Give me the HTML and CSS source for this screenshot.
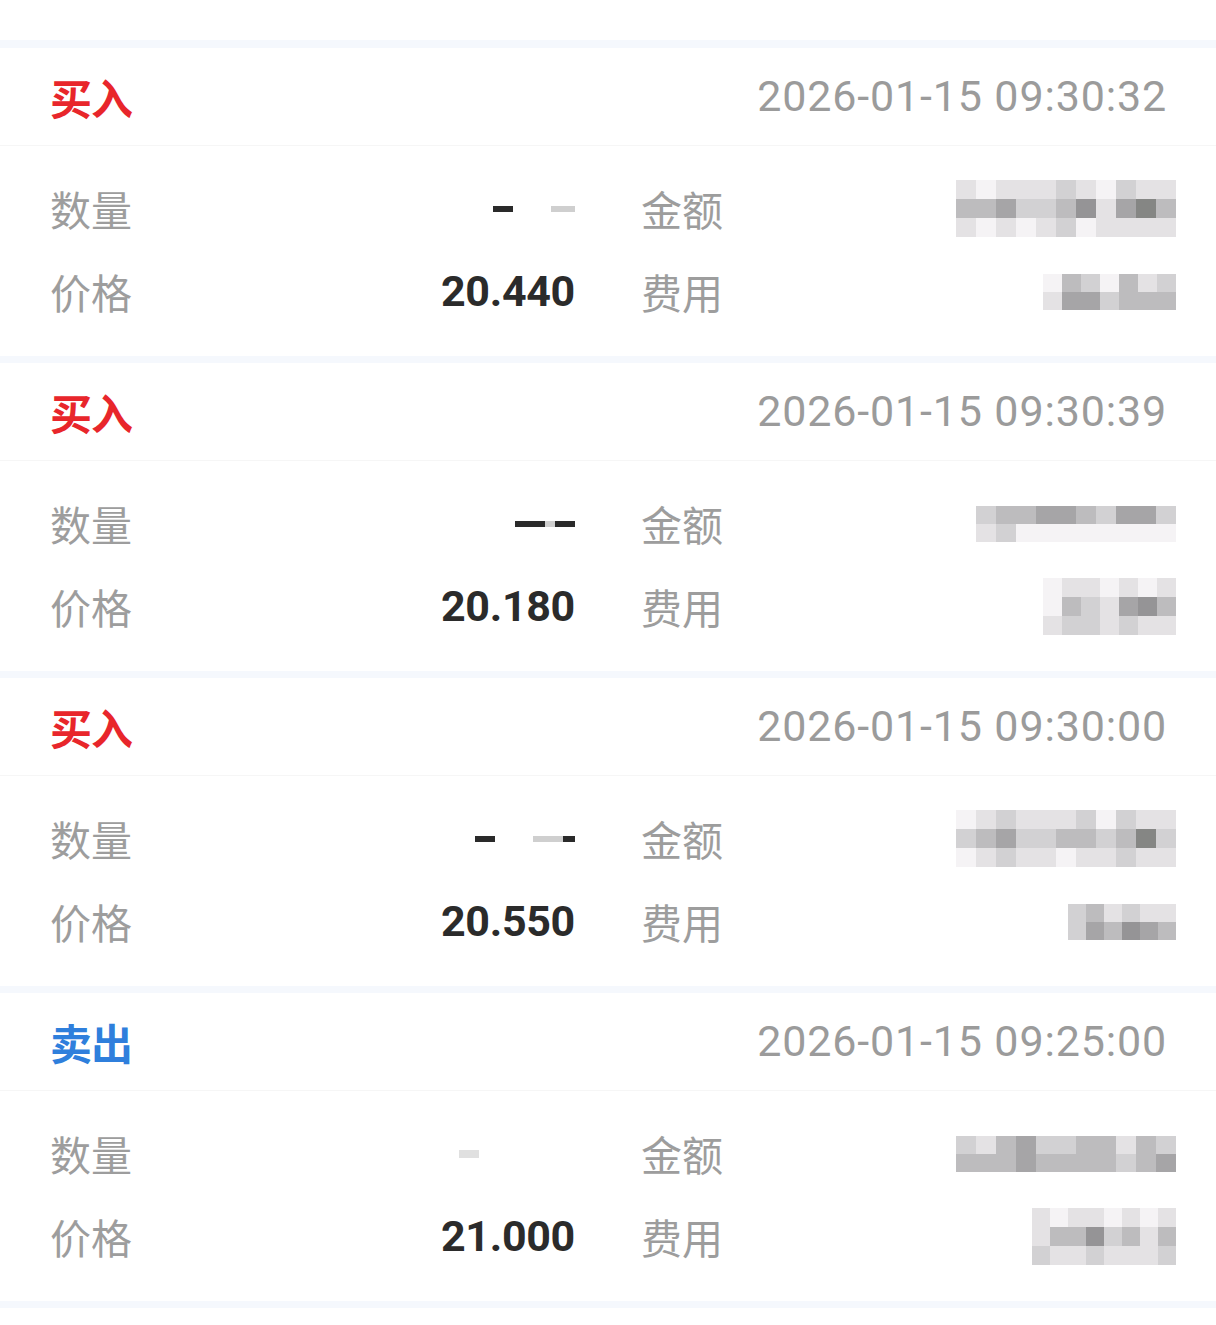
FILE: index.html
```html
<!DOCTYPE html>
<html lang="zh-CN">
<head>
<meta charset="utf-8">
<title>成交记录</title>
<link rel="stylesheet" href="styles.css">
</head>
<body>
<main class="list">

  <section class="card">
    <header class="card-head">
      <span class="side buy">买入</span>
      <span class="time">2026-01-15 09:30:32</span>
    </header>
    <div class="card-body">
      <div class="cell"><span class="label">数量</span><span class="value masked"><i class="frag dark w20"></i><i class="frag gap"></i><i class="frag grey w24"></i></span></div>
      <div class="cell"><span class="label">金额</span><span class="mosaic c11">
        <i class="s1"></i><i class="s0"></i><i class="s1"></i><i class="s1"></i><i class="s1"></i><i class="s2"></i><i class="s1"></i><i class="s0"></i><i class="s2"></i><i class="s1"></i><i class="s1"></i>
        <i class="s3"></i><i class="s3"></i><i class="s4"></i><i class="s2"></i><i class="s2"></i><i class="s3"></i><i class="s5"></i><i class="s1"></i><i class="s4"></i><i class="s6"></i><i class="s3"></i>
        <i class="s1"></i><i class="s0"></i><i class="s1"></i><i class="s0"></i><i class="s1"></i><i class="s2"></i><i class="s0"></i><i class="s1"></i><i class="s1"></i><i class="s1"></i><i class="s1"></i>
      </span></div>
      <div class="cell"><span class="label">价格</span><span class="value">20.440</span></div>
      <div class="cell"><span class="label">费用</span><span class="mosaic c7 r2">
        <i class="s0"></i><i class="s3"></i><i class="s2"></i><i class="s0"></i><i class="s3"></i><i class="s1"></i><i class="s2"></i>
        <i class="s1"></i><i class="s4"></i><i class="s4"></i><i class="s2"></i><i class="s3"></i><i class="s3"></i><i class="s3"></i>
      </span></div>
    </div>
  </section>

  <section class="card">
    <header class="card-head">
      <span class="side buy">买入</span>
      <span class="time">2026-01-15 09:30:39</span>
    </header>
    <div class="card-body">
      <div class="cell"><span class="label">数量</span><span class="value masked"><i class="frag dark w30"></i><i class="frag grey w10"></i><i class="frag dark w20"></i></span></div>
      <div class="cell"><span class="label">金额</span><span class="mosaic c10 r2">
        <i class="s2"></i><i class="s3"></i><i class="s3"></i><i class="s4"></i><i class="s4"></i><i class="s3"></i><i class="s2"></i><i class="s4"></i><i class="s4"></i><i class="s2"></i>
        <i class="s1"></i><i class="s2"></i><i class="s0"></i><i class="s0"></i><i class="s0"></i><i class="s0"></i><i class="s0"></i><i class="s0"></i><i class="s0"></i><i class="s0"></i>
      </span></div>
      <div class="cell"><span class="label">价格</span><span class="value">20.180</span></div>
      <div class="cell"><span class="label">费用</span><span class="mosaic c7">
        <i class="s0"></i><i class="s1"></i><i class="s1"></i><i class="s0"></i><i class="s1"></i><i class="s0"></i><i class="s1"></i>
        <i class="s0"></i><i class="s3"></i><i class="s2"></i><i class="s1"></i><i class="s4"></i><i class="s5"></i><i class="s3"></i>
        <i class="s1"></i><i class="s2"></i><i class="s2"></i><i class="s1"></i><i class="s2"></i><i class="s1"></i><i class="s1"></i>
      </span></div>
    </div>
  </section>

  <section class="card">
    <header class="card-head">
      <span class="side buy">买入</span>
      <span class="time">2026-01-15 09:30:00</span>
    </header>
    <div class="card-body">
      <div class="cell"><span class="label">数量</span><span class="value masked"><i class="frag dark w20"></i><i class="frag gap"></i><i class="frag grey w30"></i><i class="frag dark w12"></i></span></div>
      <div class="cell"><span class="label">金额</span><span class="mosaic c11">
        <i class="s0"></i><i class="s1"></i><i class="s2"></i><i class="s1"></i><i class="s1"></i><i class="s1"></i><i class="s2"></i><i class="s0"></i><i class="s2"></i><i class="s1"></i><i class="s1"></i>
        <i class="s2"></i><i class="s3"></i><i class="s4"></i><i class="s2"></i><i class="s2"></i><i class="s3"></i><i class="s3"></i><i class="s2"></i><i class="s3"></i><i class="s6"></i><i class="s2"></i>
        <i class="s0"></i><i class="s1"></i><i class="s2"></i><i class="s1"></i><i class="s1"></i><i class="s0"></i><i class="s1"></i><i class="s1"></i><i class="s2"></i><i class="s1"></i><i class="s1"></i>
      </span></div>
      <div class="cell"><span class="label">价格</span><span class="value">20.550</span></div>
      <div class="cell"><span class="label">费用</span><span class="mosaic c6 r2">
        <i class="s2"></i><i class="s3"></i><i class="s1"></i><i class="s2"></i><i class="s1"></i><i class="s1"></i>
        <i class="s2"></i><i class="s4"></i><i class="s3"></i><i class="s5"></i><i class="s4"></i><i class="s3"></i>
      </span></div>
    </div>
  </section>

  <section class="card">
    <header class="card-head">
      <span class="side sell">卖出</span>
      <span class="time">2026-01-15 09:25:00</span>
    </header>
    <div class="card-body">
      <div class="cell"><span class="label">数量</span><span class="value masked"><i class="frag light w20"></i><i class="frag gap wide"></i></span></div>
      <div class="cell"><span class="label">金额</span><span class="mosaic c11 r2">
        <i class="s2"></i><i class="s1"></i><i class="s3"></i><i class="s4"></i><i class="s2"></i><i class="s2"></i><i class="s3"></i><i class="s3"></i><i class="s1"></i><i class="s3"></i><i class="s2"></i>
        <i class="s3"></i><i class="s3"></i><i class="s3"></i><i class="s4"></i><i class="s3"></i><i class="s3"></i><i class="s3"></i><i class="s3"></i><i class="s2"></i><i class="s3"></i><i class="s4"></i>
      </span></div>
      <div class="cell"><span class="label">价格</span><span class="value">21.000</span></div>
      <div class="cell"><span class="label">费用</span><span class="mosaic c8">
        <i class="s1"></i><i class="s0"></i><i class="s1"></i><i class="s1"></i><i class="s0"></i><i class="s1"></i><i class="s0"></i><i class="s1"></i>
        <i class="s1"></i><i class="s3"></i><i class="s3"></i><i class="s5"></i><i class="s2"></i><i class="s3"></i><i class="s1"></i><i class="s3"></i>
        <i class="s2"></i><i class="s1"></i><i class="s1"></i><i class="s2"></i><i class="s1"></i><i class="s1"></i><i class="s1"></i><i class="s2"></i>
      </span></div>
    </div>
  </section>

</main>
</body>
</html>
```

FILE: styles.css
```css
* { box-sizing: border-box; }

html, body {
  margin: 0;
  padding: 0;
  background: #ffffff;
}

body {
  font-family: Roboto, "Noto Sans CJK SC", sans-serif;
  padding-top: 40px;
  height: 1325px;
  overflow: hidden;
}

.list {
  display: flex;
  flex-direction: column;
}

.card {
  border-top: 8px solid #f5f8fd;
  background: #ffffff;
}

.card:last-child {
  border-bottom: 7px solid #f5f8fd;
}

.card + .card {
  border-top-width: 7px;
}

.card-head {
  height: 98px;
  padding: 0 50px;
  display: flex;
  align-items: center;
  justify-content: space-between;
  border-bottom: 1px solid #f6f6f6;
}

.side {
  font-family: "Noto Sans CJK SC", sans-serif;
  font-size: 42px;
  font-weight: 700;
  letter-spacing: -1px;
  line-height: 1;
}

.side.buy { color: #e8262b; }
.side.sell { color: #2f7fdc; }

.time {
  font-size: 43px;
  color: #9b9b9b;
  letter-spacing: 0.85px;
  margin-right: -1px;
  line-height: 1;
}

.card-body {
  display: grid;
  grid-template-columns: 1fr 1fr;
  column-gap: 66px;
  padding: 21px 50px 23px;
}

.cell {
  height: 83px;
  display: flex;
  align-items: center;
  justify-content: space-between;
}

.label {
  font-family: "Noto Sans CJK SC", sans-serif;
  font-size: 41px;
  color: #9d9d9d;
  line-height: 1;
}

.value {
  font-size: 43px;
  font-weight: 700;
  color: #2b2b2b;
  letter-spacing: -0.3px;
  line-height: 1;
}

.masked {
  display: flex;
  align-items: center;
  gap: 0;
  height: 20px;
}

.frag {
  display: block;
  height: 6px;
}

.frag.dark { background: #2a2a2a; }
.frag.grey { background: #cfcfcf; }
.frag.light { background: #e0e0e0; height: 8px; }
.frag.gap { width: 38px; }
.frag.gap.wide { width: 96px; }
.w10 { width: 10px; }
.w12 { width: 12px; }
.w20 { width: 20px; }
.w24 { width: 24px; }
.w30 { width: 30px; }

.mosaic {
  display: grid;
  grid-auto-rows: 19px;
  margin-right: -10px;
}

.mosaic.c11 { grid-template-columns: repeat(11, 20px); }
.mosaic.c10 { grid-template-columns: repeat(10, 20px); }
.mosaic.c8 { grid-template-columns: repeat(8, 18px); }
.mosaic.c7 { grid-template-columns: repeat(7, 19px); }
.mosaic.c6 { grid-template-columns: repeat(6, 18px); }
.mosaic.r2 { grid-auto-rows: 18px; }

.mosaic i { display: block; }
.s0 { background: #f5f3f5; }
.s1 { background: #e4e2e4; }
.s2 { background: #d2d1d3; }
.s3 { background: #bdbcbe; }
.s4 { background: #a6a5a7; }
.s5 { background: #959496; }
.s6 { background: #858684; }
```
